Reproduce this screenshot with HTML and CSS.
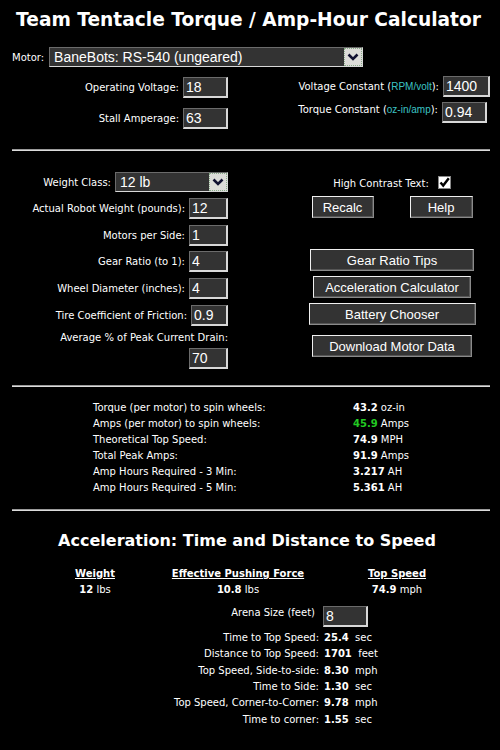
FILE: index.html
```html
<!DOCTYPE html>
<html>
<head>
<meta charset="utf-8">
<title>Team Tentacle Torque / Amp-Hour Calculator</title>
<link rel="stylesheet" href="styles.css">
</head>
<body>
<div class="page">
  <h1 class="title">Team Tentacle Torque / Amp-Hour Calculator</h1>

  <div class="motor-row">
    <label class="lbl">Motor:</label>
    <div class="select motor-select">
      <span class="select-text">BaneBots: RS-540 (ungeared)</span>
      <span class="arrow"><svg width="12" height="8" viewBox="0 0 12 8"><path d="M1.5 1.5 L6 6 L10.5 1.5" fill="none" stroke="#101030" stroke-width="2.6"/></svg></span>
    </div>
  </div>

  <div class="top-grid">
    <div class="col">
      <div class="field"><label>Operating Voltage:</label><input class="box w45" value="18"></div>
      <div class="field"><label>Stall Amperage:</label><input class="box w45" value="63"></div>
    </div>
    <div class="col col-right">
      <div class="field"><label>Voltage Constant (<span class="teal">RPM/volt</span>):</label><input class="box w47" value="1400"></div>
      <div class="field field-top torque"><label>Torque Constant (<span class="teal">oz-in/amp</span>):</label><input class="box w45" value="0.94"></div>
    </div>
  </div>

  <hr class="rule">

  <div class="mid-grid">
    <div class="col mid-left">
      <div class="field"><label>Weight Class:</label>
        <div class="select weight-select">
          <span class="select-text">12 lb</span>
          <span class="arrow"><svg width="12" height="8" viewBox="0 0 12 8"><path d="M1.5 1.5 L6 6 L10.5 1.5" fill="none" stroke="#101030" stroke-width="2.6"/></svg></span>
        </div>
      </div>
      <div class="field"><label>Actual Robot Weight (pounds):</label><input class="box w39" value="12"></div>
      <div class="field"><label>Motors per Side:</label><input class="box w39" value="1"></div>
      <div class="field"><label>Gear Ratio (to 1):</label><input class="box w39" value="4"></div>
      <div class="field"><label>Wheel Diameter (inches):</label><input class="box w39" value="4"></div>
      <div class="field"><label>Tire Coefficient of Friction:</label><input class="box w37" value="0.9"></div>
      <div class="stack">
        <label>Average % of Peak Current Drain:</label>
        <input class="box w39" value="70">
      </div>
    </div>
    <div class="col mid-right">
      <div class="contrast"><span>High Contrast Text:</span>
        <svg class="check" width="13" height="13" viewBox="0 0 13 13"><rect x="0.5" y="0.5" width="12" height="12" fill="#fff" stroke="#888"/><path d="M2.5 6.5 L5.2 9.5 L10.8 2.2" fill="none" stroke="#000" stroke-width="2.4"/></svg>
      </div>
      <div class="btn-pair">
        <button class="btn b-recalc">Recalc</button>
        <button class="btn b-help">Help</button>
      </div>
      <div class="btn-list">
        <button class="btn b-gear">Gear Ratio Tips</button>
        <button class="btn b-accel">Acceleration Calculator</button>
        <button class="btn b-batt">Battery Chooser</button>
        <button class="btn b-dl">Download Motor Data</button>
      </div>
    </div>
  </div>

  <hr class="rule rule2">

  <div class="results">
    <span>Torque (per motor) to spin wheels:</span><span><b>43.2</b> oz-in</span>
    <span>Amps (per motor) to spin wheels:</span><span><b class="green">45.9</b> Amps</span>
    <span>Theoretical Top Speed:</span><span><b>74.9</b> MPH</span>
    <span>Total Peak Amps:</span><span><b>91.9</b> Amps</span>
    <span>Amp Hours Required - 3 Min:</span><span><b>3.217</b> AH</span>
    <span>Amp Hours Required - 5 Min:</span><span><b>5.361</b> AH</span>
  </div>

  <hr class="rule rule3">

  <h2 class="accel-title">Acceleration: Time and Distance to Speed</h2>

  <div class="accel-table">
    <span class="th">Weight</span><span class="th">Effective Pushing Force</span><span class="th">Top Speed</span>
    <span><b>12</b> lbs</span><span><b>10.8</b> lbs</span><span><b>74.9</b> mph</span>
  </div>

  <div class="arena">
    <label>Arena Size (feet)</label><input class="box w45" value="8">
  </div>

  <div class="accel-rows">
    <span class="k">Time to Top Speed:</span><span><b>25.4</b>  sec</span>
    <span class="k">Distance to Top Speed:</span><span><b>1701</b>  feet</span>
    <span class="k">Top Speed, Side-to-side:</span><span><b>8.30</b>  mph</span>
    <span class="k">Time to Side:</span><span><b>1.30</b>  sec</span>
    <span class="k">Top Speed, Corner-to-Corner:</span><span><b>9.78</b>  mph</span>
    <span class="k">Time to corner:</span><span><b>1.55</b>  sec</span>
  </div>
</div>
</body>
</html>
```

FILE: styles.css
```css
* { box-sizing: border-box; }

body {
  margin: 0;
  background: #000;
  color: #fff;
  font-family: "DejaVu Sans", Verdana, sans-serif;
  font-size: 10px;
}

.page {
  width: 500px;
  padding: 0 10px 20px 12px;
}

.title {
  margin: 10px 0 0;
  font-size: 18.6px;
  line-height: 20px;
  font-weight: bold;
  text-align: center;
  padding-right: 5px;
}

label { white-space: nowrap; }

.motor-row {
  display: flex;
  align-items: center;
  gap: 5px;
  margin-top: 17px;
}

.select {
  display: inline-flex;
  align-items: stretch;
  height: 20px;
  background: #333;
  border: 1px solid;
  border-color: #6b6b6b #d8d8d8 #d8d8d8 #6b6b6b;
  font-family: "Liberation Sans", Arial, sans-serif;
  font-size: 14px;
}
.select-text {
  flex: 1;
  padding-left: 4px;
  line-height: 18px;
}
.arrow {
  width: 18px;
  background: #dcdcd8;
  border: 1px dotted #8a8;
  display: flex;
  align-items: center;
  justify-content: center;
}
.motor-select { width: 314px; }
.weight-select { width: 113px; }

.box {
  height: 21px;
  margin: 0;
  background: #333;
  color: #fff;
  font-family: "Liberation Sans", Arial, sans-serif;
  font-size: 14px;
  padding: 0 2px;
  border-style: solid;
  border-width: 1px 2px 2px 1px;
  border-color: #6b6b6b #d8d8d8 #d8d8d8 #6b6b6b;
  outline: none;
}
.w45 { width: 45px; }
.w47 { width: 47px; }
.w39 { width: 39px; }
.w37 { width: 37px; }

.top-grid {
  display: grid;
  grid-template-columns: 216px 1fr;
  margin-top: 9px;
}
.col {
  display: flex;
  flex-direction: column;
}
.top-grid .col:first-child { gap: 10px; padding-top: 1px; }
.col-right { gap: 5px; }

.field {
  display: flex;
  justify-content: flex-end;
  align-items: center;
  gap: 4px;
}
.field-top { align-items: flex-start; }
.field-top label { padding-top: 2px; }
.torque { margin-right: 3px; }

.teal {
  color: #3cc4c4;
  font-family: "Liberation Sans", Arial, sans-serif;
  font-size: 10px;
}

.rule {
  height: 0;
  margin: 20px 0 0;
  border: 0;
  border-top: 1px solid #9a9a9a;
  border-bottom: 1px solid #dcdcdc;
}

.mid-grid {
  display: grid;
  grid-template-columns: 216px 1fr 196px;
  margin-top: 21px;
}
.mid-left { gap: 5.8px; }
.mid-right { grid-column: 3; align-items: center; }

.stack {
  display: flex;
  flex-direction: column;
  align-items: flex-end;
  gap: 5px;
}

.contrast {
  display: flex;
  align-items: flex-end;
  gap: 9px;
  margin-top: 4px;
  height: 13px;
}
.contrast span { line-height: 11px; }

.btn {
  height: 22px;
  padding: 0;
  margin: 0;
  background: #333;
  color: #fff;
  font-family: "Liberation Sans", Arial, sans-serif;
  font-size: 13px;
  border-style: solid;
  border-width: 1px;
  border-color: #f0f0f0 #8a8a8a #8a8a8a #f0f0f0;
  box-shadow: inset -1px -1px 0 #555;
}

.btn-pair {
  display: flex;
  gap: 36px;
  margin-top: 7px;
}
.b-recalc { width: 62px; }
.b-help { width: 63px; }

.btn-list {
  display: flex;
  flex-direction: column;
  align-items: center;
  gap: 5px;
  margin-top: 31px;
}
.b-gear { width: 164px; }
.b-accel { width: 158px; }
.b-batt { width: 167px; }
.b-dl { width: 160px; margin-top: 5px; }

.rule2 { margin-top: 16px; }

.results {
  display: grid;
  grid-template-columns: 260px auto;
  padding-left: 81px;
  line-height: 16px;
  margin-top: 13px;
}
.green { color: #22c922; }

.rule3 { margin-top: 13px; }

.accel-title {
  margin: 20px 0 0;
  font-size: 16px;
  line-height: 20px;
  font-weight: bold;
  text-align: center;
  padding-right: 8px;
}

.accel-table {
  display: grid;
  grid-template-columns: 130px 156px 162px;
  padding-left: 18px;
  margin-top: 15px;
  text-align: center;
  line-height: 16px;
}
.th {
  font-weight: bold;
  text-decoration: underline;
}

.arena {
  display: grid;
  grid-template-columns: 303px auto;
  column-gap: 8px;
  align-items: start;
  margin-top: 8px;
}
.arena label { text-align: right; padding-top: 1px; }

.accel-rows {
  display: grid;
  grid-template-columns: 307px auto;
  column-gap: 5px;
  line-height: 16.4px;
  margin-top: 3px;
  white-space: pre;
}
.k { text-align: right; }
```
